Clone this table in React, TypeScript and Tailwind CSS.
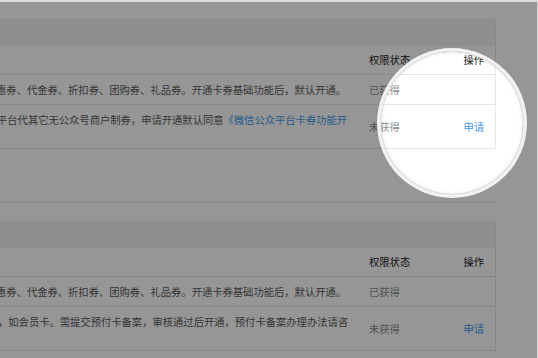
import React from "react";

type Row = {
  desc: React.ReactNode;
  shift: string;
  status: string;
  action?: string;
  tall?: boolean;
};

const sections: { pad: string; rows: Row[] }[] = [
  {
    pad: "pt-[19px]",
    rows: [
      {
        desc: "惠券、代金券、折扣券、团购券、礼品券。开通卡券基础功能后，默认开通。",
        shift: "-ml-[4px]",
        status: "已获得",
      },
      {
        desc: (
          <>
            平台代其它无公众号商户制券，申请开通默认同意
            <span className="text-[#459ae9]">《微信公众平台卡券功能开</span>
          </>
        ),
        shift: "-ml-[3px]",
        status: "未获得",
        action: "申请",
        tall: true,
      },
    ],
  },
  {
    pad: "pt-[18px]",
    rows: [
      {
        desc: "惠券、代金券、折扣券、团购券、礼品券。开通卡券基础功能后，默认开通。",
        shift: "-ml-[4px]",
        status: "已获得",
      },
      {
        desc: "，如会员卡。需提交预付卡备案，审核通过后开通，预付卡备案办理办法请咨",
        shift: "-ml-[2px]",
        status: "未获得",
        action: "申请",
        tall: true,
      },
    ],
  },
];

// ── One permission panel: grey title band + table ───────────────────────────
function Section({ pad, rows, last }: { pad: string; rows: Row[]; last?: boolean }) {
  return (
    <div className={`${pad} w-[496px] ${last ? "" : "border-b border-[#e7e7eb]"}`}>
      <div className="h-[27px] bg-[#eff1f4] border-r border-[#e4e7ea]" />
      <div className="border-r border-[#e7e7eb]">
        <div className="flex items-center h-[29px] border-b border-[#e7e7eb] text-[#222]">
          <div className="w-[359px]" />
          <div className="flex-1 pl-[10px]">权限状态</div>
          <div className="w-[60px] text-right pr-[11px]">操作</div>
        </div>
        {rows.map((r, i) => (
          <div key={i}
               className={`flex border-b border-[#e7e7eb] ${r.tall ? "h-[44px] items-start" : "h-[30px] items-center"}`}>
            <div className={`w-[359px] overflow-hidden ${r.tall ? "pt-[8px]" : ""}`}>
              <span className={`block whitespace-nowrap text-[#5a5a5a] ${r.shift}`}>{r.desc}</span>
            </div>
            <div className="flex-1 self-center pl-[10px] text-[#8d8d8d]">{r.status}</div>
            <div className="w-[60px] self-center text-right pr-[11px] text-[#459ae9]">{r.action}</div>
          </div>
        ))}
      </div>
      {!last && <div className="h-[53px]" />}
    </div>
  );
}

export default function App() {
  return (
    <div className="relative w-[538px] h-[358px] overflow-hidden bg-white text-[10.3px] leading-[14px] font-['Noto_Sans_CJK_SC','Noto_Sans',sans-serif]">
      {sections.map((s, i) => (
        <Section key={i} pad={s.pad} rows={s.rows} last={i === sections.length - 1} />
      ))}

      {/* magnifier spotlight: dims everything but the circle */}
      <div className="absolute left-[381px] top-[52px] w-[142px] h-[142px] rounded-full shadow-[inset_0_0_5px_rgba(0,0,0,0.08),0_0_0_1px_#e3e3e3,0_0_0_4px_#f2f2f2,0_0_2px_4px_rgba(0,0,0,0.08),0_0_0_9999px_rgba(0,0,0,0.41)]" />

      {/* screenshot frame */}
      <div className="absolute left-0 right-0 top-0 h-[2px] bg-[#dcdcdc]" />
      <div className="absolute right-0 top-0 bottom-0 w-[1px] bg-[#d4d4d4]" />
    </div>
  );
}
